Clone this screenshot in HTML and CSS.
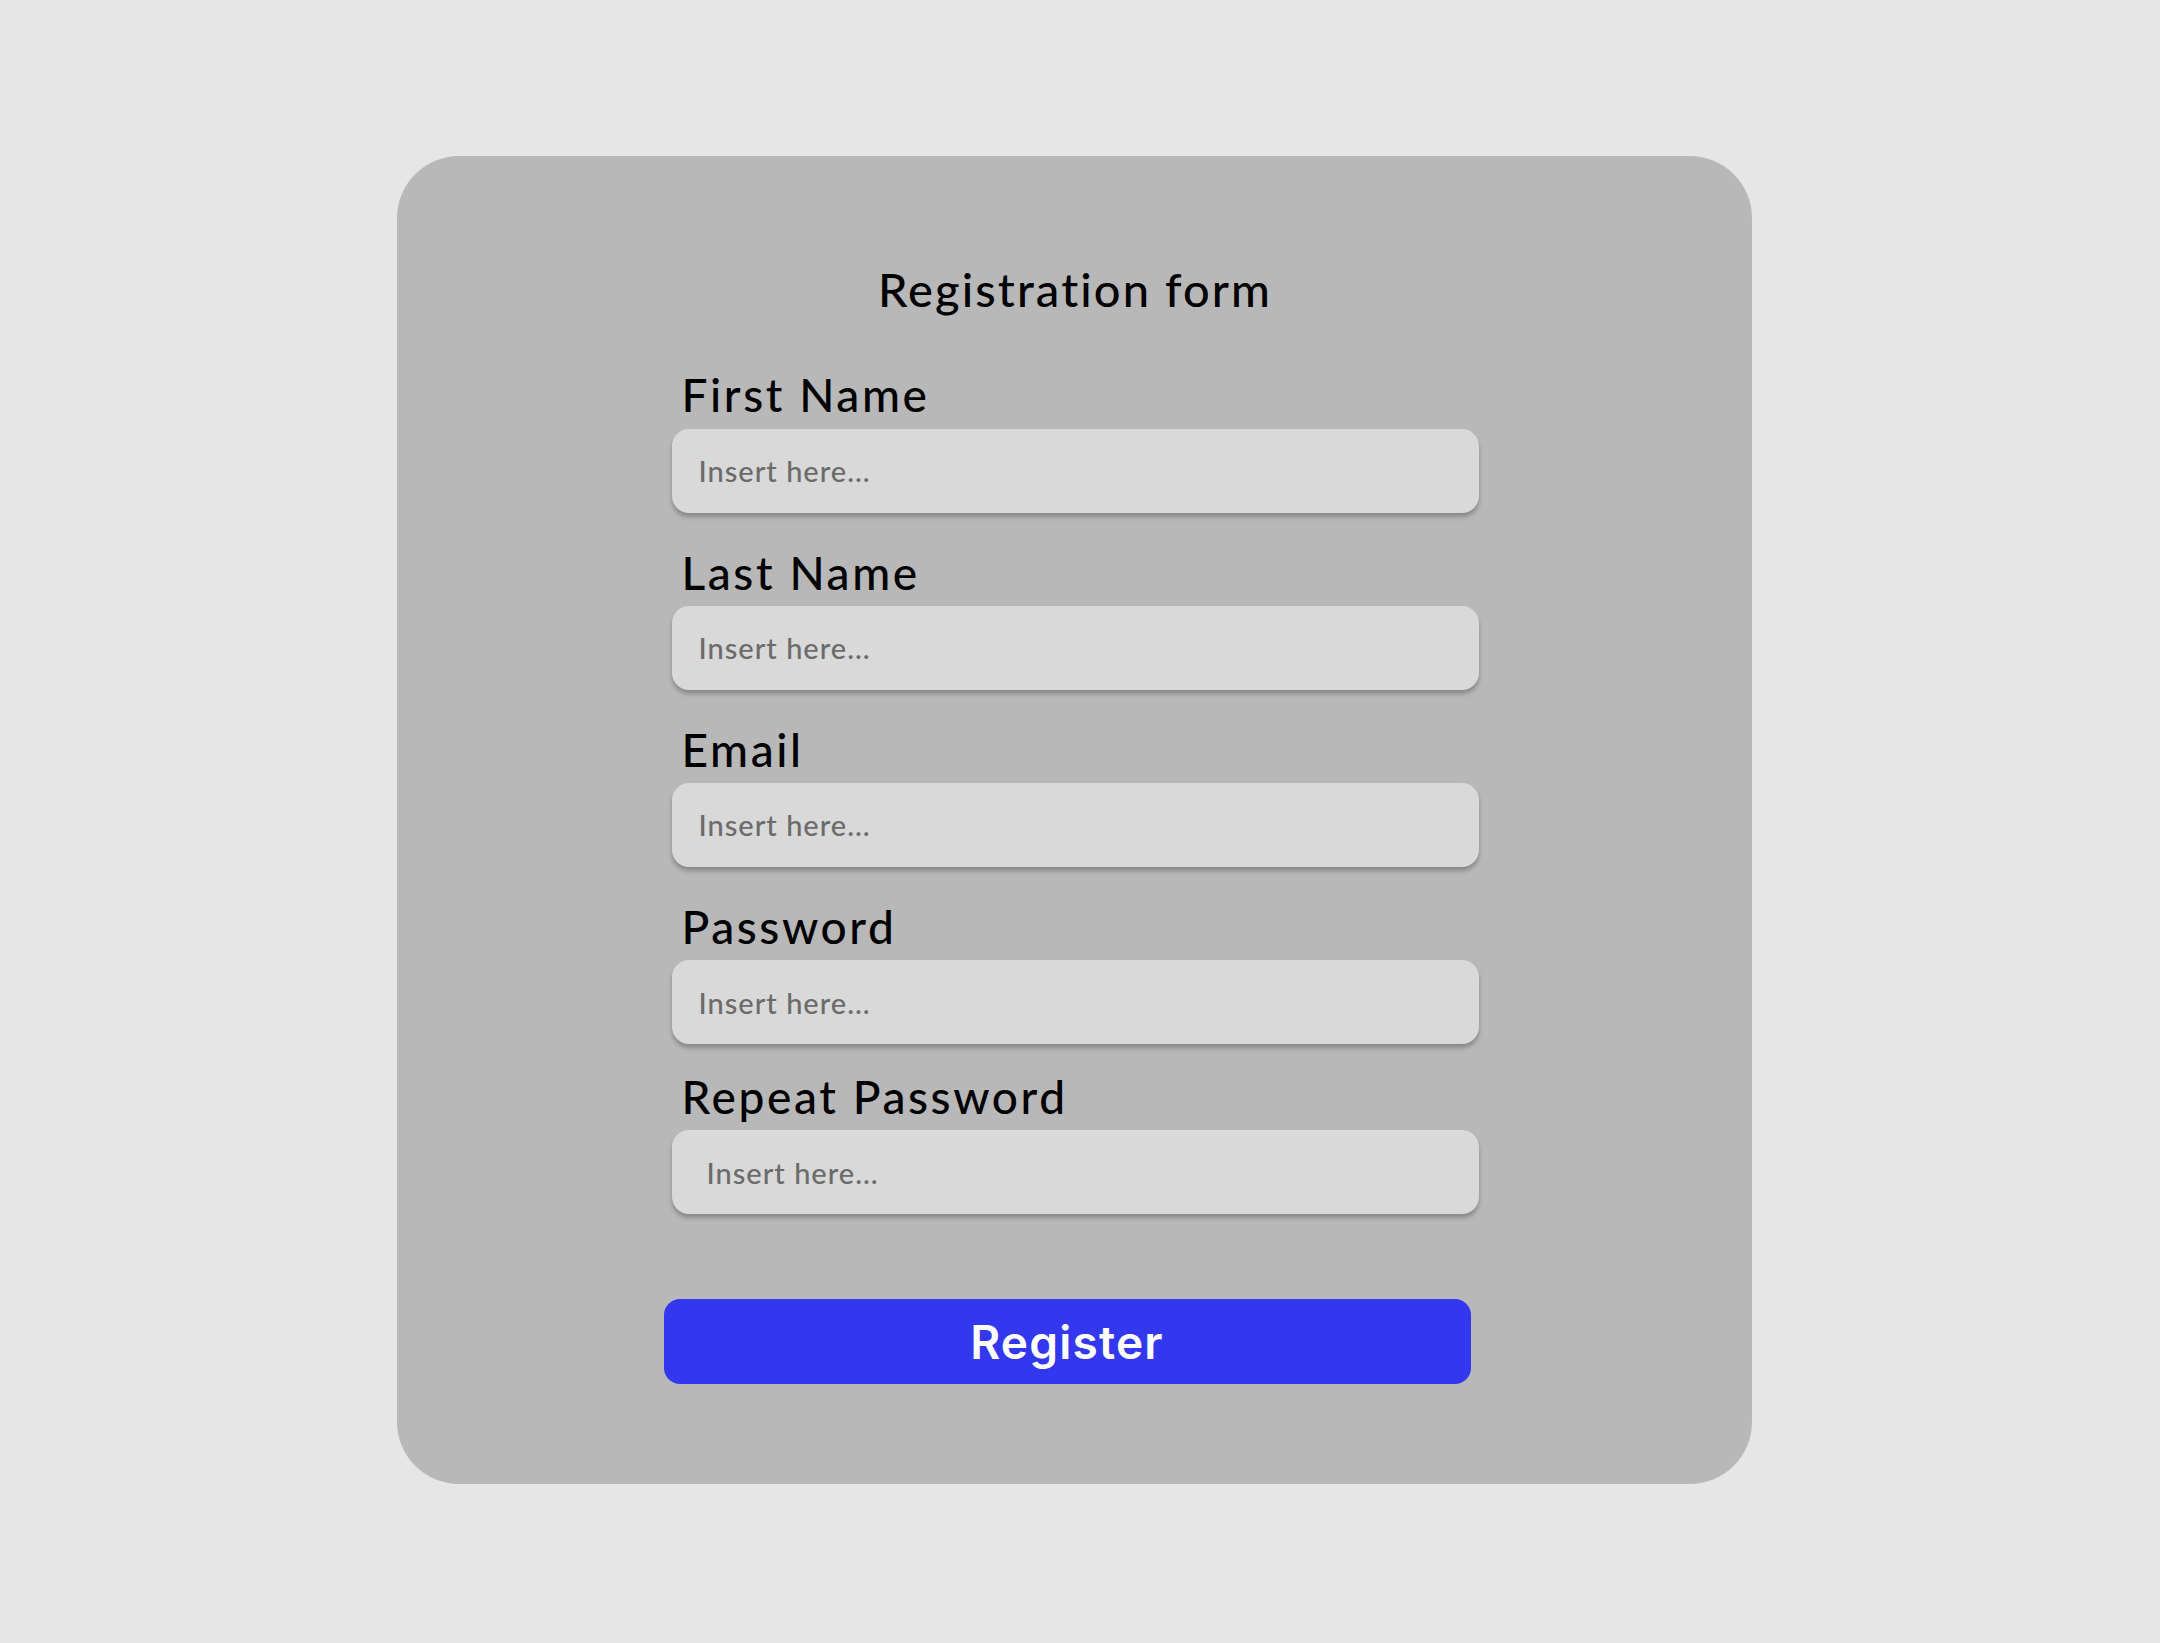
FILE: index.html
```html
<!DOCTYPE html>
<html lang="en">
<head>
<meta charset="utf-8">
<title>Registration form</title>
<link rel="stylesheet" href="styles.css">
</head>
<body>
<div class="page">
  <form class="card">
    <div class="column">
      <h1 class="title">Registration form</h1>
      <div class="group">
        <label class="label" for="fn">First Name</label>
        <input class="field" id="fn" type="text" placeholder="Insert here...">
      </div>
      <div class="group">
        <label class="label" for="ln">Last Name</label>
        <input class="field" id="ln" type="text" placeholder="Insert here...">
      </div>
      <div class="group">
        <label class="label" for="em">Email</label>
        <input class="field" id="em" type="email" placeholder="Insert here...">
      </div>
      <div class="group">
        <label class="label" for="pw">Password</label>
        <input class="field" id="pw" type="password" placeholder="Insert here...">
      </div>
      <div class="group group--tight">
        <label class="label" for="pw2">Repeat Password</label>
        <input class="field field--wide-pad" id="pw2" type="password" placeholder="Insert here...">
      </div>
      <button class="button" type="button">Register</button>
    </div>
  </form>
</div>
</body>
</html>
```

FILE: styles.css
```css
html, body {
  margin: 0;
  padding: 0;
  background: #e6e6e6;
}

.page {
  padding: 156px 0 0 397px;
  min-height: 1643px;
  box-sizing: border-box;
}

.card {
  width: 1355px;
  height: 1328px;
  box-sizing: border-box;
  background: #b8b8b8;
  border-radius: 62px;
  padding-top: 105px;
  display: flex;
  justify-content: center;
}

.column {
  width: 807px;
  display: flex;
  flex-direction: column;
  margin-left: 1px;
}

.title {
  margin: 0 0 50px;
  font-family: "Lato", "Noto Sans", sans-serif;
  font-weight: 500;
  font-size: 47px;
  line-height: 1.2;
  letter-spacing: 2.1px;
  text-align: center;
  color: #000;
}

.group {
  display: flex;
  flex-direction: column;
  margin-bottom: 32px;
}

.group--tight {
  margin-top: -7px;
  margin-bottom: 85px;
}

.label {
  font-family: "Lato", "Noto Sans", sans-serif;
  font-weight: 500;
  font-size: 46px;
  line-height: 1.2;
  letter-spacing: 2.6px;
  color: #000;
  padding-left: 10px;
  margin-bottom: 6px;
}

.field {
  display: block;
  width: 100%;
  height: 84px;
  box-sizing: border-box;
  border: none;
  outline: none;
  border-radius: 17px;
  background: #d9d9d9;
  box-shadow: 0 4px 4px rgba(0, 0, 0, 0.25);
  padding: 0 27px;
  font-family: "Lato", "Noto Sans", sans-serif;
  font-weight: 500;
  font-size: 29px;
  letter-spacing: 1px;
  color: #333;
}

.field--wide-pad {
  padding-left: 35px;
}

.field::placeholder {
  color: #6b6b6b;
  opacity: 1;
}

.button {
  width: 807px;
  height: 85px;
  margin-left: -8px;
  border: none;
  border-radius: 16px;
  background: #3337ed;
  color: #fff;
  font-family: "Inter", "Roboto", sans-serif;
  font-weight: 600;
  font-size: 46px;
  letter-spacing: 1.2px;
  padding: 0;
  cursor: pointer;
}
```
